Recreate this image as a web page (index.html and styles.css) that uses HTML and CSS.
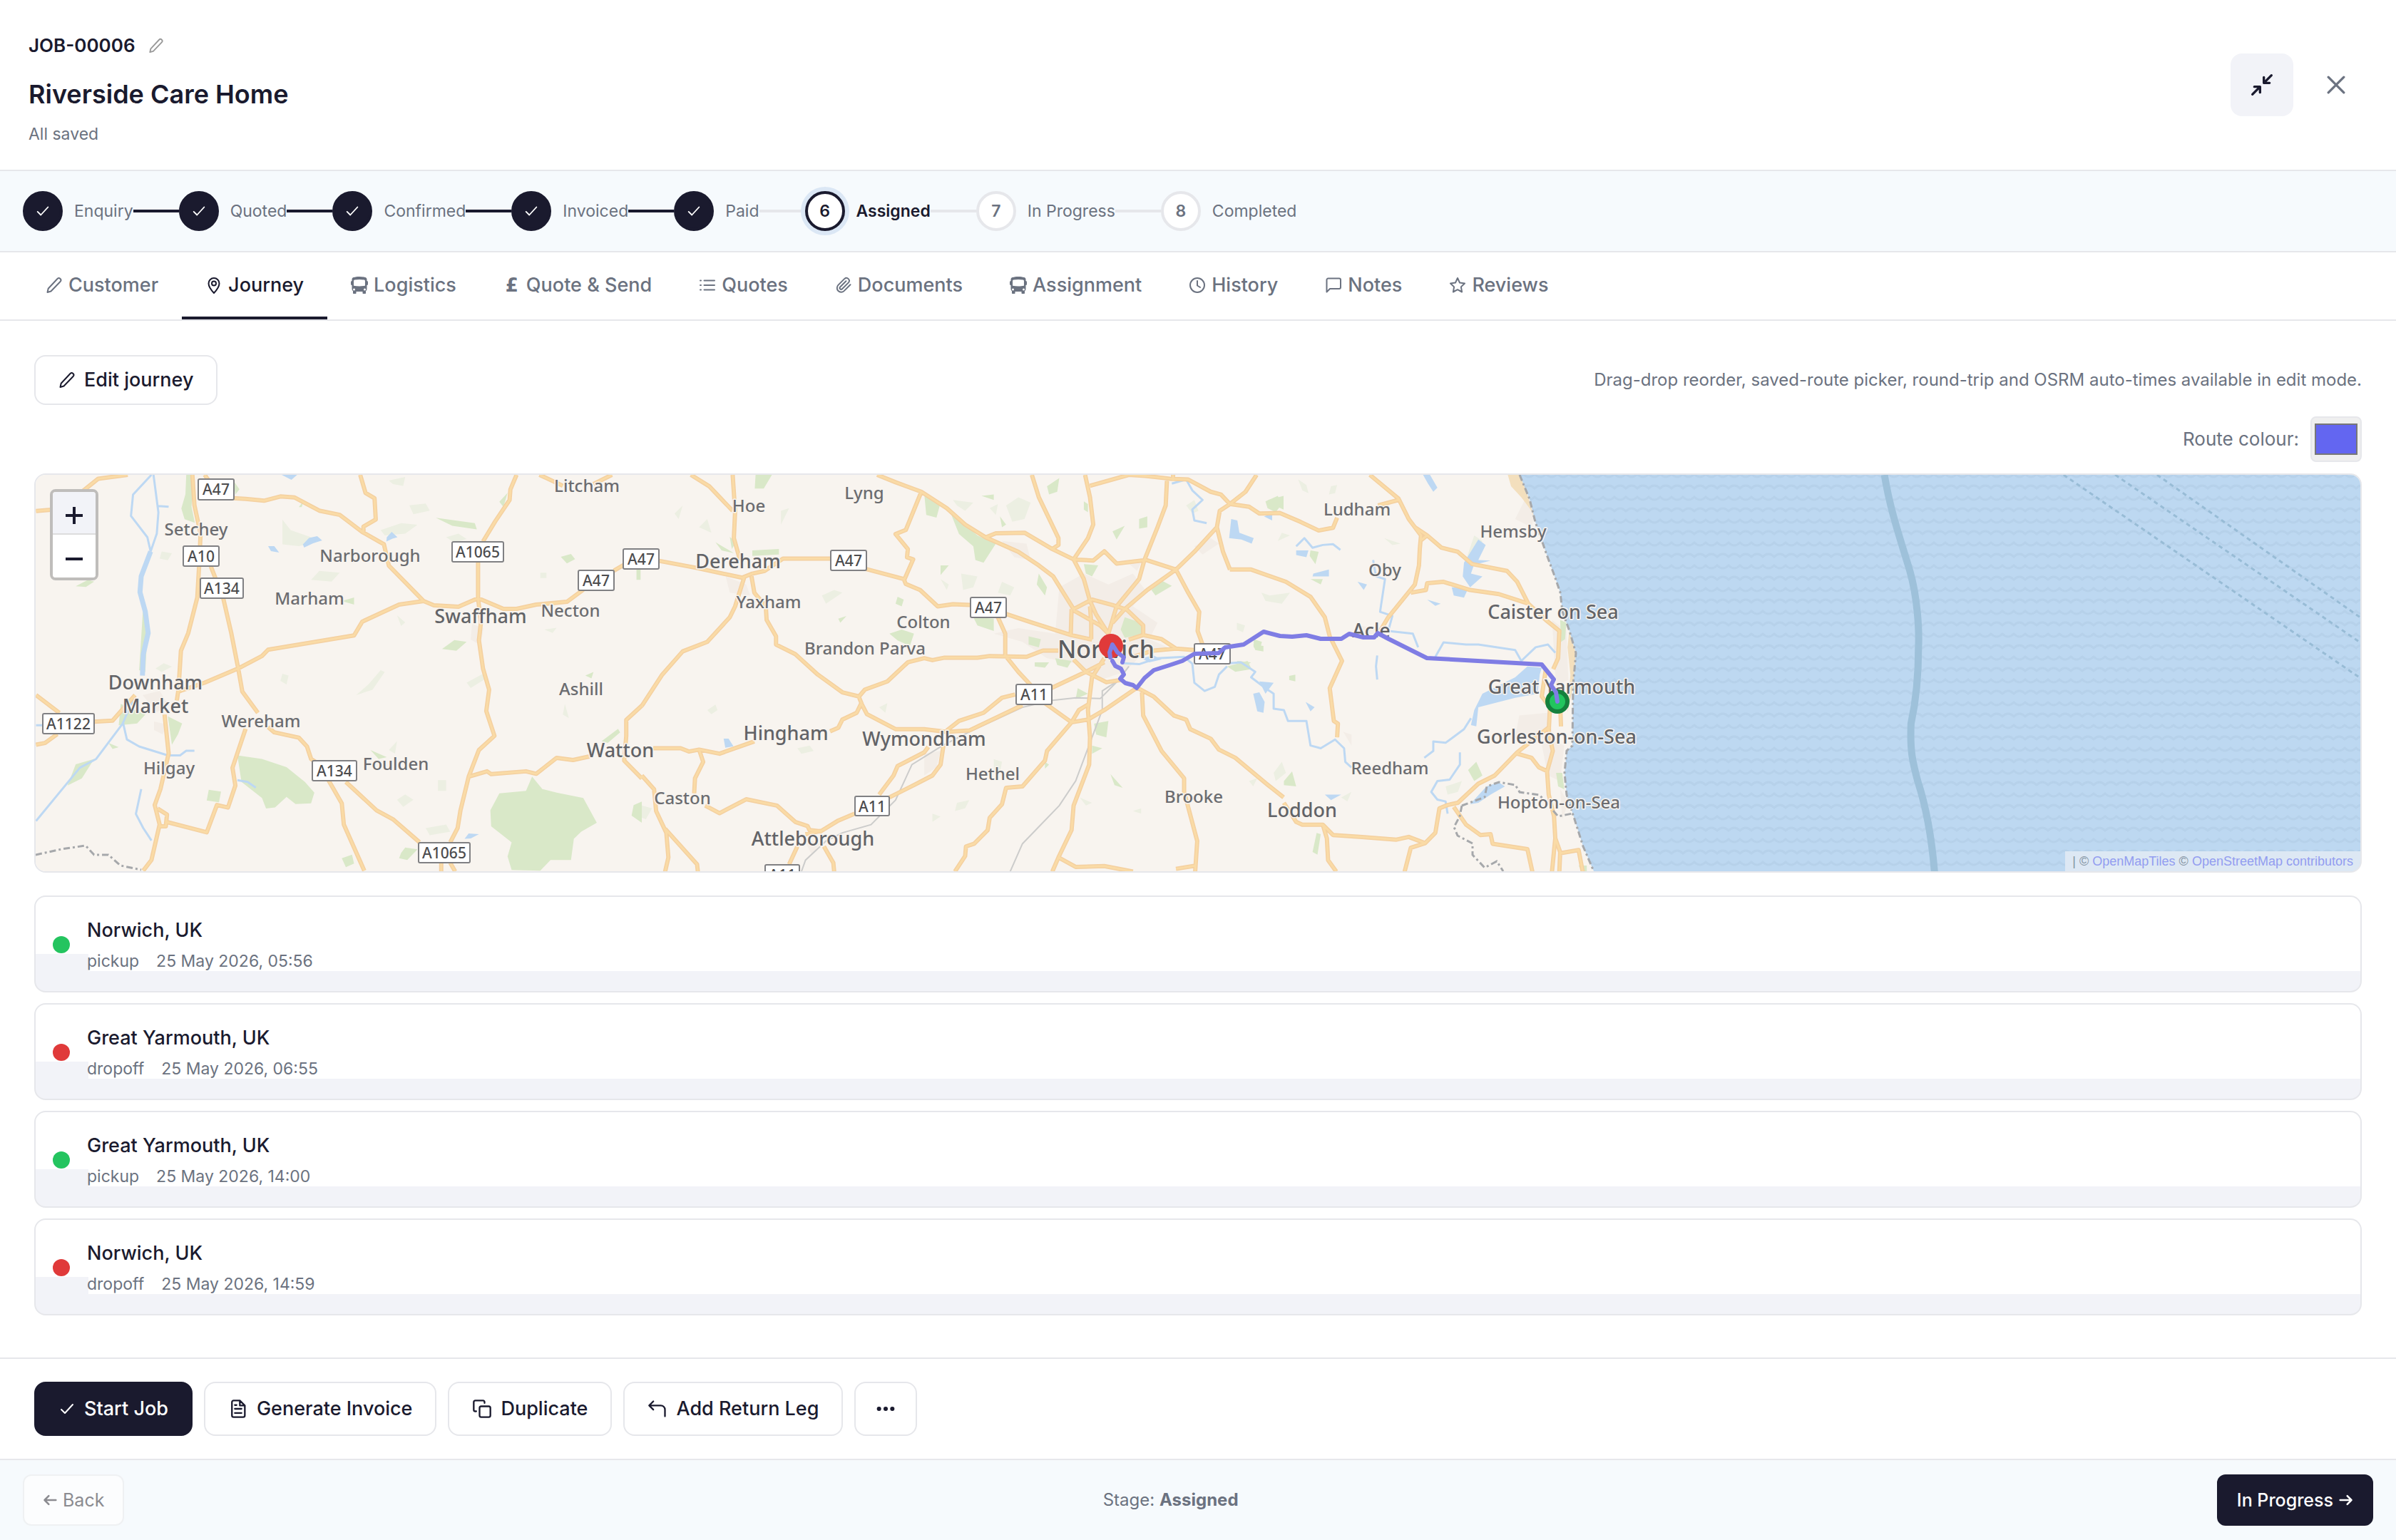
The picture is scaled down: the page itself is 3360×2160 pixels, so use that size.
FILE: index.html
```html
<!DOCTYPE html>
<html lang="en">
<head>
<meta charset="utf-8">
<meta name="viewport" content="width=device-width, initial-scale=1">
<title>JOB-00006 – Riverside Care Home</title>
<link rel="stylesheet" href="styles.css">
</head>
<body>
<svg class="sprite" aria-hidden="true">
  <symbol id="i-pencil" viewBox="0 0 24 24"><path d="M16.5 3a2.6 2.6 0 0 1 4 4L7.500 20.500 2.500 22l1.200-5.300z"/></symbol>
  <symbol id="i-check" viewBox="0 0 24 24"><path d="M4 13l5 5L20 6"/></symbol>
  <symbol id="i-pin" viewBox="0 0 24 24"><path d="M19.500 9.500C19.500 15 12 23 12 23S4.500 15 4.500 9.500a7.500 7.500 0 0 1 15 0z"/><circle cx="12" cy="9.500" r="3"/></symbol>
  <symbol id="i-bus" viewBox="0 0 16 16"><path fill="currentColor" stroke="none" fill-rule="evenodd" d="M16 7a1 1 0 0 1-1 1v3.500c0 .8-.4 1.500-1 2v2a.5.5 0 0 1-.5.5h-2a.5.5 0 0 1-.5-.5V14H5v1.500a.5.5 0 0 1-.5.5h-2a.5.5 0 0 1-.5-.5v-2a2.500 2.500 0 0 1-1-2V8a1 1 0 0 1-1-1V5a1 1 0 0 1 1-1V2.600C1 1.600 1.700.9 2.600.7 4 .3 6 0 8 0s4 .3 5.400.7c.9.2 1.600.9 1.600 1.900V4a1 1 0 0 1 1 1zM3.500 3a.9.9 0 0 0-.8.900V8.500c1.600.3 3.300.5 5.300.5s3.700-.2 5.300-.5V3.900a.9.9 0 0 0-.8-.9A40 40 0 0 0 8 2.700 40 40 0 0 0 3.500 3zM4 12a1 1 0 1 0-2 0 1 1 0 0 0 2 0zm10 0a1 1 0 1 0-2 0 1 1 0 0 0 2 0z"/></symbol>
  <symbol id="i-list" viewBox="0 0 24 24"><path d="M7.500 5.500H22M7.500 12H22M7.500 18.500H22M2 5.500h1M2 12h1M2 18.500h1"/></symbol>
  <symbol id="i-clip" viewBox="0 0 24 24"><path d="M21.500 11.200l-8.900 8.900a5.800 5.800 0 0 1-8.200-8.200l9-9a3.900 3.900 0 0 1 5.500 5.500l-8.900 8.900a1.950 1.950 0 0 1-2.800-2.800l8.200-8.200"/></symbol>
  <symbol id="i-clock" viewBox="0 0 24 24"><circle cx="12" cy="12" r="10"/><path d="M12 6v6.500l4 2.500"/></symbol>
  <symbol id="i-chat" viewBox="0 0 24 24"><path d="M2.500 21.500V4.500a2 2 0 0 1 2-2h15.500a2 2 0 0 1 2 2v10.500a2 2 0 0 1-2 2H7z"/></symbol>
  <symbol id="i-star" viewBox="0 0 24 24"><path d="M12 2l3 6.500 7 1-5.100 4.900 1.200 7.100L12 18.200 5.900 21.500l1.200-7.100L2 9.500l7-1z"/></symbol>
  <symbol id="i-doc" viewBox="0 0 24 24"><path d="M14 2H6.500a2 2 0 0 0-2 2v16a2 2 0 0 0 2 2h11.500a2 2 0 0 0 2-2V8zM14 2v6h6M8 12h8M8 17h8M8 7.500h2"/></symbol>
  <symbol id="i-copy" viewBox="0 0 24 24"><rect x="9" y="9" width="13" height="13" rx="2"/><path d="M5 15H4a2 2 0 0 1-2-2V4a2 2 0 0 1 2-2h9a2 2 0 0 1 2 2v1"/></symbol>
  <symbol id="i-return" viewBox="0 0 24 24"><path d="M7 13L2 8l5-5M2 8h14a5 5 0 0 1 5 5v8"/></symbol>
  <symbol id="i-dots" viewBox="0 0 24 24"><g fill="currentColor" stroke="none"><circle cx="4" cy="12" r="2.600"/><circle cx="12" cy="12" r="2.600"/><circle cx="20" cy="12" r="2.600"/></g></symbol>
  <symbol id="i-collapse" viewBox="0 0 24 24"><path d="M22 2l-8 8M14 4v6h6M2 22l8-8M10 20v-6H4"/></symbol>
  <symbol id="i-close" viewBox="0 0 24 24"><path d="M2 2l20 20M22 2L2 22"/></symbol>
  <symbol id="i-left" viewBox="0 0 24 24"><path d="M22 12H3M10 5l-7 7 7 7"/></symbol>
  <symbol id="i-right" viewBox="0 0 24 24"><path d="M2 12h19M14 5l7 7-7 7"/></symbol>
</svg>

<header class="head">
  <div class="head-text">
    <div class="job">JOB-00006 <button class="bare" type="button" aria-label="Edit job number"><svg class="ico s-22"><use href="#i-pencil"/></svg></button></div>
    <h1>Riverside Care Home</h1>
    <p class="saved">All saved</p>
  </div>
  <div class="head-tools">
    <button class="tool tool-on" type="button" aria-label="Collapse"><svg class="ico s-32 mid"><use href="#i-collapse"/></svg></button>
    <button class="tool" type="button" aria-label="Close"><svg class="ico s-26 bold"><use href="#i-close"/></svg></button>
  </div>
</header>

<ol class="steps">
  <li class="done"><span class="dot"><svg class="ico s-22"><use href="#i-check"/></svg></span><span class="name">Enquiry</span></li>
  <li class="done"><span class="dot"><svg class="ico s-22"><use href="#i-check"/></svg></span><span class="name">Quoted</span></li>
  <li class="done"><span class="dot"><svg class="ico s-22"><use href="#i-check"/></svg></span><span class="name">Confirmed</span></li>
  <li class="done"><span class="dot"><svg class="ico s-22"><use href="#i-check"/></svg></span><span class="name">Invoiced</span></li>
  <li class="done last-done"><span class="dot"><svg class="ico s-22"><use href="#i-check"/></svg></span><span class="name">Paid</span></li>
  <li class="current"><span class="dot">6</span><span class="name">Assigned</span></li>
  <li><span class="dot">7</span><span class="name">In Progress</span></li>
  <li><span class="dot">8</span><span class="name">Completed</span></li>
</ol>

<nav class="tabs" role="tablist" aria-label="Job sections">
  <button role="tab" type="button"><svg class="ico s-24"><use href="#i-pencil"/></svg>Customer</button>
  <button role="tab" type="button" aria-selected="true"><svg class="ico s-24"><use href="#i-pin"/></svg>Journey</button>
  <button role="tab" type="button"><svg class="ico s-24"><use href="#i-bus"/></svg>Logistics</button>
  <button role="tab" type="button"><span class="pound" aria-hidden="true">£</span>Quote &amp; Send</button>
  <button role="tab" type="button"><svg class="ico s-24"><use href="#i-list"/></svg>Quotes</button>
  <button role="tab" type="button"><svg class="ico s-24"><use href="#i-clip"/></svg>Documents</button>
  <button role="tab" type="button"><svg class="ico s-24"><use href="#i-bus"/></svg>Assignment</button>
  <button role="tab" type="button"><svg class="ico s-24"><use href="#i-clock"/></svg>History</button>
  <button role="tab" type="button"><svg class="ico s-24"><use href="#i-chat"/></svg>Notes</button>
  <button role="tab" type="button"><svg class="ico s-24"><use href="#i-star"/></svg>Reviews</button>
</nav>

<main class="content">
  <div class="toolbar">
    <button class="btn btn-sm" type="button"><svg class="ico s-24"><use href="#i-pencil"/></svg>Edit journey</button>
    <p class="hint">Drag-drop reorder, saved-route picker, round-trip and OSRM auto-times available in edit mode.</p>
  </div>
  <div class="colour">
    <label for="route-colour">Route colour:</label>
    <input id="route-colour" type="color" value="#6366f1">
  </div>

  <section class="map" aria-label="Route map">
    <svg class="map-art" viewBox="50 666 3260 556" preserveAspectRatio="xMidYMid slice">
      <defs>
        <pattern id="waves" x="0" y="2" width="16" height="32" patternUnits="userSpaceOnUse">
          <rect width="16" height="32" fill="#bdd8f1"/>
          <path d="M0 7q4 0 8 4q4-4 8-4M0 27q4 0 8-4q4 4 8 4" fill="none" stroke="#b6d1ea" stroke-width="3"/>
        </pattern>
      </defs>
      <rect x="50" y="666" width="3260" height="556" fill="#f8f4ef"/>

      <!-- built-up areas and farmland -->
      <g class="pale">
        <g transform="translate(0 460) scale(.574 .4975)">
          <path d="M690 540l20 30 50 20 10 15-40 10-40-5zM930 570l50-20 40 5-30 25-50 5zM760 710l20-25 50 5-20 25zM1000 500l40-5 10 20-40 10zM1090 590l30-10 20 15-30 10zM870 1035l30-30 30-40 10 5-30 50zM950 1190l20-25-5 35zM690 975l15 5-5 25-15-10zM1140 1000l40-25 5 15-35 25zM1070 1275h20v30h-20zM1040 1410l50-10 10 20-50 10zM970 1330l20-15 20 15-25 20zM380 960l20-15 20 10-25 15zM395 630l25 5-10 20-20-5zM970 810l20 20-10 10zM1380 1060l10 40-15-10zM950 430l40-10-5 25-25-5zM1330 850l30-5-10 15zM1320 690h15v15h-15z"/>
        </g>
        <g transform="translate(900 640) scale(.574 .3827)">
          <path d="M760 160l50 10-20 30-20-20zM850 190l20-15-5 40zM890 180l30-30 30 20-15 60-30 10zM780 430l40 10-10 40-25 10zM880 460l30 20-10 30-30-10zM730 450l20 20-5 20zM580 920l20-15-5 35zM160 930l20-20 5 20-15 15zM140 260l20-30 10 50zM340 200l20-10-20 60zM380 1070l30-10 10 20-30 10zM860 1110l20 10-5 40-15-5zM770 1270l30-10-10 30-25 10zM710 1310l20 10-20 20zM1070 1250l30 20-15 10zM440 510l30-20 20 10-40 40zM80 210l20-30-10 50zM0 1280l25 10-15 40-10-5zM1330 180l20-20 10 40-15 10zM1200 1300l20-10v20z"/>
        </g>
        <g transform="translate(1700 640) scale(.574 .3827)">
          <path d="M210 85l20 20 5 30-15-10zM290 110l15-5-5 30-15 5zM120 500l20 10 50-10-20 40-40-10zM420 300l40 20-20 5zM170 280l20 10-30 20zM60 610l20 10-5 25-15-10zM640 290l20 20-15 60-25 10zM570 1210l40-20-10 40-25 10zM150 1160l20-40 10 40-25 30zM315 1250l25-20-10 35zM90 1190l20-10-10 30z"/>
        </g>
      </g>
      <g class="town">
        <g transform="translate(900 640) scale(.574 .3827)">
          <path d="M1020 480l60-50 60 40 60-40 30 60-30 60 60 60-20 60 60 40-80 20-40 60-60 30-60-60-70-20-60-60-70-30 60-20 90 20zM880 310l60 10 10 60-40-10zM205 440l50 30 10 40-50-10zM1350 330l40-30 20 20-40 40zM690 1090l40-10-10 60-30 30zM395 1400l40 20-20 40zM1180 380l40 10-10 30z"/>
        </g>
        <g transform="translate(1700 640) scale(.574 .3827)">
          <path d="M750 950l70-10 10 70-60 50-30-30zM830 600l35 40 5 180-30 20zM800 1020l60 40-10 130-30-20zM850 1220l20 50-15 60zM770 140l20 60-10 60-40-30zM340 1060l-20-50 20 10zM350 620l60 10 5 30-50-5z"/>
        </g>
        <path d="M662 875l16 6-4 24-14-8zM200 975l24-6 12 20-16 10zM216 1012l18 4-6 14-12-6z"/>
      </g>

      <!-- woodland -->
      <g class="wood">
        <g transform="translate(0 460) scale(.574 .4975)">
          <path d="M580 1205L640 1215 700 1238 745 1280 768 1310 760 1340 722 1342 700 1322 672 1352 650 1355 640 1325 590 1280zM1198 1360L1220 1312 1285 1305 1300 1265 1325 1300 1360 1310 1425 1325 1458 1395 1420 1420 1402 1440 1395 1500 1345 1500 1320 1530 1250 1528 1240 1490 1250 1450 1200 1405zM455 414h18l-5 90 8 45-25-10-8-30 10-40zM165 1290L185 1230 230 1215 200 1270zM295 1060l60 30-20 25-45 5zM410 1095l35 20-10 30-15 30zM510 1302l30 5-5 30-30-5zM350 780l10 80-5 110-15-5zM1080 905l30-25 30 5-25 25zM1065 535l95 15 5 18-60-10zM1370 645l25-8 10 15-20 12zM1220 490l20-25-10 40zM185 728l30-18 15 5-20 15zM835 770l30-10v20zM1470 1165l40-35 5 10-30 30zM1430 980l20-10-5 18zM570 430l15 25-10 15zM980 1480l10-15 30 5-25 30-20-5zM835 1495l25-10 5 25-20 10zM1548 1345l20-10v60l-25-20zM1555 680h10v30h-10zM905 1190l40 20-20 5zM265 1170l25 12-15 5zM730 505l12-18-5 18z"/>
        </g>
        <g transform="translate(900 640) scale(.574 .3827)">
          <path d="M278 68h40l-20 50h-22zM690 135l40 35-10 55-25-10zM755 210l35 40 30 40 45 30-30 70-20-10-5-50-35-45zM970 430l20 50-5 30-20-40zM1080 395l35 5-15 40-15-10zM1270 455l25 20-40 35-10-20zM1180 590l40 20 10 40-50 15-10-30zM810 590l50 5v45l-40-20zM605 650l30-15 30 15-10 45-30-20zM625 515l15 10-5 25-15-10zM480 595l20-10-15 25zM270 345l65-5v20l-65 5zM180 315l45 40-30-10zM215 295l15 20-10 25zM1215 230l20-10v40l-20 5zM1150 275l30-20-20 50zM1080 165l10 10v30l-10-10zM990 110l30-30-5 50-20 10zM830 145l30-5v20zM730 400l20 0-20 35zM1065 850l25 20-30 20zM1105 980l35-10-5 60-25-10zM1100 1060l25 10-25 20zM1145 1165l30 50-20-10zM985 1120l10 10-10 15zM1010 740l40 10-10 25-25-10zM960 755h35l-10 20-25-5zM945 660l30 10-5 30-25-10zM1495 670l20 10-5 30-15-10zM1430 770l50-20 10 30-40 10zM1530 160l38-15v50l-30-20zM875 220l15 30-10 10z"/>
        </g>
        <g transform="translate(1700 640) scale(.574 .3827)">
          <path d="M130 165l30-20 10 30-15 30-20-15zM240 345l20 5-8 45-14-30zM240 450l30 0-5 20zM100 690l25 5v20l-20-5zM188 805l15-5v25l-15-5zM625 1150l20-30 15 50-20 20zM175 1190l20-35 10 55-30-5zM255 1380l10 5-8 75-12-10zM850 600l15 10-3 60-10 10zM840 1160h15l5 60-15-10zM895 1500h20v22h-12zM60 750l35 5-20 20z"/>
        </g>
      </g>

      <!-- rivers and broads -->
      <g class="river">
        <g transform="translate(0 460) scale(.574 .4975)">
          <path class="wide" d="M368 630L345 700 342 745 355 800 362 860 350 920 348 980"/>
          <path d="M370 414L325 470 320 530 360 590 368 630M375 414L387 520 383 580 368 630M387 502L412 504"/>
          <path d="M325 1045L300 1115 235 1215 195 1240 88 1390M300 1110L310 1160 340 1180 410 1205 440 1205 455 1192 475 1192M345 1300L332 1370 350 1410 370 1445M88 1120H105M580 1275L605 1280 625 1296"/>
        </g>
        <g transform="translate(900 640) scale(.574 .3827)">
          <path d="M1170 758L1215 762 1260 740 1325 735 1345 760 1350 830 1375 860 1400 845 1410 800 1430 770M1295 100L1330 85 1345 125 1370 160 1345 195 1350 235 1380 245"/>
        </g>
        <g transform="translate(1700 640) scale(.574 .3827)">
          <path d="M30 760L70 755 105 790 95 810 130 850 150 870 150 925 175 930 185 970 230 970 240 1060 265 1070 300 1038 322 1070 325 1120 340 1140M393 380L400 440 422 450 410 570 440 585 430 640 490 650 503 700M545 735L565 682 620 690 650 690 740 710 755 750 790 700 820 690 838 720M403 730L400 770 403 818M632 960L615 1000 570 1050 540 1045 540 1080 518 1105M605 1085L605 1130 580 1185 550 1190 535 1230 550 1258 570 1265 575 1310M205 330L225 300 245 335 270 325 295 322 313 343"/>
        </g>
      </g>
      <g class="lake">
        <g transform="translate(0 460) scale(.574 .4975)">
          <path d="M740 610l15-18 20-5 12 12-22 8-22 12zM655 615l15 0 12 18-20-4zM945 590l12-15 14 15-12 4-15 8zM1135 1440l10-15 25 2-20 12zM688 414h38l-14 14zM318 1060l12-10 8 10-10 10z"/>
        </g>
        <g transform="translate(900 640) scale(.574 .3827)"><path d="M200 1035l12 0 12 28-20 5zM1220 740l30-10 20 15-30 10zM1440 230l15 5 5 45 35 20-5 20-25-15-30-5zM1520 220l20-10v25z"/></g>
        <g transform="translate(1700 640) scale(.574 .3827)">
          <path d="M770 770L805 775 800 800 795 870 740 885 650 920 645 990 632 985 640 930 660 870 700 840 740 810zM650 305L668 325 650 380 680 382 655 392 640 395 632 430 660 440 630 480 612 440 615 390zM585 480L625 485 615 518 590 510zM515 68H532L550 115 540 130 527 100zM205 345L235 345 230 370 205 362zM247 430L285 415 285 440 245 440zM355 460L378 470 370 490zM525 525L558 540 545 548zM100 870L115 865 128 900 125 940 110 935zM115 825L150 830 130 870zM228 900L250 920 240 935zM275 1240L315 1240 290 1260zM670 1210l30-15 15 15-35 30-30 30-20 5z"/>
        </g>
      </g>

      <!-- railway -->
      <g class="rail" transform="translate(900 640) scale(.574 .3827)">
        <path d="M390 1522L400 1480 450 1410 490 1380 560 1350 620 1260 660 1130 735 1060 800 1010 930 920 1000 895 1060 885 1120 888 1165 820 1190 770M1165 820L1125 860 1125 930 1100 1030 1060 1190 1020 1280 930 1420 900 1522"/>
      </g>

      <!-- main roads: casing first, then the lighter centre line -->
      <g class="road-case">
        <g id="roads">
          <g transform="translate(0 460) scale(.574 .4975)">
            <path d="M571 480L600 482 645 487 685 475 720 478 780 515 830 527 885 575 938 610 950 670 1035 770 1060 782 1120 786 1168 762 1230 792 1262 792 1310 780 1385 772 1425 738M1500 684L1524 668M88 516L130 512M200 462L240 425 312 414M470 414L475 500 490 580 487 660 482 760 460 860 442 910 436 1020 432 1050M500 414L510 430M515 672L545 760 565 860 582 960 592 1025 630 1085M655 1125L670 1140 730 1155 750 1180 760 1215 780 1230 815 1300 835 1340 840 1400 890 1530M436 1025L500 1000 582 960 640 925 655 907 865 867 885 828 975 780 1035 770M88 1175L110 1170 140 1145M88 1035L145 1085M230 1110L275 1107 330 1035M402 1090L412 1200 392 1300 378 1345 390 1400 370 1500 350 1530M385 1355L408 1372 405 1405 390 1405M408 1393L505 1422 530 1345 557 1352 575 1290 568 1240 600 1130M845 1280L920 1360 960 1385 1025 1450M1078 1508V1532M1100 1508L1112 1532M1100 1450L1118 1410 1125 1360 1145 1265 1170 1190 1208 1150 1188 1080 1195 1020 1180 960 1170 880 1175 830 1168 762 1168 658M1180 602L1210 545 1245 485 1247 455 1262 414M880 414L893 465 915 480 918 540 888 560 888 580M1145 1265L1190 1250 1200 1258 1285 1250 1310 1257 1360 1212 1400 1218 1440 1208M1318 414L1375 445M1450 440L1495 414M1568 1065L1530 1105 1530 1150 1525 1220 1568 1270"/>
          </g>
          <g transform="translate(900 640) scale(.574 .3827)">
            <path d="M42 383L130 408 245 445 270 430 300 420 345 375 460 375M548 413L640 450 645 468 680 490 723 550 760 542 802 545M890 578L950 608 1048 655 1100 672M222 68L228 200 225 300 240 380M120 68L165 110 222 200M250 445L228 550 215 590 160 680 100 715 50 800 0 915M268 440L275 500 303 550 305 600 328 660 328 690 375 725 430 800 490 865 530 880M575 68L620 95 683 130 745 190 790 250 840 297 920 350 970 400 1005 440 1055 560M683 130L645 270 620 285 650 340 648 370 663 378 642 450M840 297L865 282 935 280 1003 340 1055 378 1103 382 1130 348 1160 393 1232 380 1305 415 1335 500 1362 570 1358 640 1370 690M953 68L970 150 1018 300 1018 325 1003 340M1083 68L1095 150 1103 250 1090 300 1055 378 1080 450 1095 530 1110 580 1140 650M1095 108L1190 68 1230 72 1290 82 1335 85 1390 130 1415 140 1437 175M1298 68V90M1283 90L1280 180 1260 260 1228 380 1215 450 1160 550 1140 650M1437 175L1412 200 1405 260 1350 350 1305 415 1235 490 1180 560 1150 610M1437 175L1475 130 1502 68M1405 260L1420 350 1437 415M1055 560L1100 525 1150 545 1185 562 1225 620 1225 655 1190 672M1225 655L1270 670 1305 705 1350 710M1055 565L1120 620 1140 650M1050 560L1048 655M1200 735L1250 712 1305 705M1095 550L1098 610 1098 670M870 590L888 650 888 730 920 790 950 838M528 885L545 855 600 825 650 755 690 740 710 747 740 738 820 738 850 732 940 735 980 712 1018 712M1000 850L1085 790 1130 755M745 1010L800 1005 870 955 930 912M745 1005L775 970 835 940 880 885 912 873M985 905L1050 975 1090 965 1130 930 1210 848M530 880L538 910 550 945 620 1000 690 1000 745 1010M538 900L525 940 490 965 480 995 460 1008M737 1060L730 1130 710 1170 665 1205 605 1250M700 1065L690 1085 625 1135 615 1170 580 1240M520 1310L480 1335 440 1372 400 1385M380 1430L360 1495M440 1375L410 1370 405 1355 375 1340 330 1280 255 1257 190 1308 155 1280M445 1430L468 1490 470 1522M28 1070L95 1070 115 1082 140 1075 190 1090 275 1045M140 1075L150 1120 130 1180 128 1235M0 1170L30 1220 35 1300 60 1380 65 1470 57 1522M57 1365L90 1420 135 1495 137 1522M1050 975L990 1080 985 1115 930 1210 890 1215 880 1275 850 1325 845 1370 812 1420 792 1430 790 1465 765 1522M1130 740L1100 810 1090 930 1095 1030 1093 1130 1055 1280 1050 1370 1018 1470 1003 1522M1018 1470L1060 1505 1130 1502 1200 1522M1305 1512L1355 1500M1055 745L1085 790 1135 828 1170 820M1090 910L1068 930 1050 975M1210 848L1250 880 1300 950 1330 965 1340 1000 1390 1035 1410 1075 1450 1105 1530 1205 1568 1250M1222 865L1225 950 1270 1080 1325 1180 1325 1230 1357 1410 1352 1522"/>
          </g>
          <g transform="translate(1700 640) scale(.574 .3827)">
            <path d="M45 175L90 185 115 210 165 208 215 240 260 272 295 262 305 225M43 415L95 415 180 460 240 515 275 590 287 660 317 750 287 850 297 970 307 980 305 1030M385 68L455 155 480 230 510 290 507 340 505 400 495 470 430 590 410 640M405 180L455 160M495 260L525 290 560 335 600 350 635 395 720 420 745 460 772 540 815 600 848 640 845 740 833 780M525 290L508 310M485 500L522 490 525 465 565 460 630 490 700 505 772 540M815 780L805 880 825 920 822 1010 832 1080 818 1155 822 1240 835 1320 838 1400 850 1450 848 1522M838 1400L830 1522M850 910L852 990M175 1270L205 1340 220 1350 270 1350 295 1388 360 1395 450 1405 480 1395 520 1418 545 1380 555 1290 575 1278 600 1270 650 1200 690 1170 745 1085 825 990M745 1090L780 1105 798 1140 820 1155M270 1350L280 1400 283 1480 303 1522M520 1418L485 1435 470 1522M590 1285L620 1350 655 1388 680 1385 685 1420 770 1440 782 1522M850 1455L895 1443 905 1522"/>
          </g>
        </g>
      </g>
      <use href="#roads" class="road-fill"/>

      <!-- sea -->
      <g transform="translate(1700 640) scale(.574 .3827)">
        <path fill="#f3dfbd" d="M722 68H755L790 240 780 200 755 150 730 110zM872 640L888 720 882 840 868 940 875 800 868 700z"/>
      </g>
      <path fill="url(#waves)" d="M2131 666L2145 700 2153 732 2169 778 2179 805 2188 831 2191 858 2201 885 2210 916 2206 961 2205 1046 2197 1053 2194 1084 2197 1115 2208 1149 2220 1187 2235 1222H3310V666z"/>
      <path class="boundary" d="M2131 666L2145 700 2153 732 2169 778 2179 805 2188 831 2191 858 2201 885 2210 916 2206 961 2205 1046 2197 1053 2194 1084 2197 1115 2208 1149 2220 1187 2235 1222"/>
      <g class="boundary">
        <path d="M2050 1130L2082 1118 2085 1103 2102 1097 2125 1101 2131 1111 2159 1115 2185 1145 2205 1141M2050 1130L2047 1145 2039 1160 2044 1172 2065 1183 2065 1199 2082 1217 2099 1208 2108 1222M50 1199L86 1191 120 1186 132 1199 152 1199 169 1214 198 1220"/>
      </g>
      <g transform="translate(2500 640) scale(.5485 .3827)">
        <path class="depth" d="M260 68C275 200 300 300 325 420 345 520 349 640 347 700 347 800 340 900 328 980 325 1080 332 1120 345 1190 370 1300 382 1420 388 1522"/>
        <path class="ferry" d="M718 68L1476 812M850 68L1476 682M957 68L1476 590"/>
      </g>

      <!-- road shields -->
      <g class="shield">
        <rect x="278" y="672" width="50" height="29"/><text x="303" y="694">A47</text>
        <rect x="257" y="766" width="50" height="28"/><text x="282" y="788">A10</text>
        <rect x="281" y="811" width="60" height="28"/><text x="311" y="833">A134</text>
        <rect x="634" y="760" width="72" height="28"/><text x="670" y="782">A1065</text>
        <rect x="811" y="800" width="50" height="28"/><text x="836" y="822">A47</text>
        <rect x="874" y="770" width="50" height="28"/><text x="899" y="792">A47</text>
        <rect x="60" y="1001" width="72" height="28"/><text x="96" y="1023">A1122</text>
        <rect x="438" y="1067" width="62" height="28"/><text x="469" y="1089">A134</text>
        <rect x="587" y="1182" width="72" height="28"/><text x="623" y="1204">A1065</text>
        <rect x="1165" y="772" width="50" height="28"/><text x="1190" y="794">A47</text>
        <rect x="1361" y="838" width="50" height="28"/><text x="1386" y="860">A47</text>
        <rect x="1425" y="960" width="50" height="28"/><text x="1450" y="982">A11</text>
        <rect x="1199" y="1117" width="48" height="27"/><text x="1223" y="1139">A11</text>
        <rect x="1073" y="1213" width="48" height="27"/><text x="1097" y="1235">A11</text>
        <rect x="1675" y="903" width="50" height="28"/><text x="1700" y="925">A47</text>
      </g>

      <!-- place names -->
      <g class="place">
        <text x="275" y="751">Setchey</text><text x="519" y="788">Narborough</text><text x="823" y="690">Litcham</text>
        <text x="434" y="848">Marham</text><text x="800" y="865">Necton</text><text x="815" y="975">Ashill</text>
        <text x="366" y="1020">Wereham</text><text x="237" y="1086">Hilgay</text><text x="555" y="1080">Foulden</text>
        <text x="1050" y="718">Hoe</text><text x="1212" y="700">Lyng</text><text x="1078" y="853">Yaxham</text>
        <text x="1295" y="881">Colton</text><text x="1213" y="918">Brandon Parva</text><text x="1392" y="1094">Hethel</text>
        <text x="1674" y="1126">Brooke</text><text x="957" y="1128">Caston</text><text x="1903" y="723">Ludham</text>
        <text x="2122" y="754">Hemsby</text><text x="1942" y="808">Oby</text><text x="1949" y="1086">Reedham</text>
        <text x="2186" y="1134">Hopton-on-Sea</text>
      </g>
      <g class="place town-name">
        <text x="674" y="874">Swaffham</text><text x="218" y="967">Downham</text><text x="218" y="1000">Market</text>
        <text x="870" y="1062">Watton</text><text x="1035" y="797">Dereham</text><text x="1102" y="1038">Hingham</text>
        <text x="1296" y="1046">Wymondham</text><text x="1140" y="1186">Attleborough</text><text x="2178" y="868">Caister on Sea</text>
        <text x="2190" y="973">Great Yarmouth</text><text x="2183" y="1043">Gorleston-on-Sea</text><text x="1826" y="1146">Loddon</text>
        <text x="1923" y="894">Acle</text>
      </g>
      <g class="place city-name"><text x="1551" y="923">Norwich</text></g>

      <!-- stops and route -->
      <circle cx="1558" cy="906" r="17" fill="#e03a3a"/>
      <circle cx="2184" cy="984" r="14" fill="#22c55e" stroke="#15803d" stroke-width="6"/>
      <g class="route">
        <path d="M1557 922L1556 915 1560 904 1567 915 1576 922 1574 929M1560 927L1564 934 1572 938 1576 946 1571 952 1578 958 1589 961 1594 965 1605 951 1618 940 1640 933 1658 927 1675 917 1709 916 1718 908 1744 904 1772 886 1795 892 1812 893 1832 891 1852 896 1881 896 1892 889 1912 894 1927 894 1932 888 1947 896 2001 923 2162 932 2179 953 2175 961 2182 971 2184 984"/>
      </g>
    </svg>
    <div class="zoom">
      <button type="button" class="hover" aria-label="Zoom in"><svg class="ico s-24 heavy" viewBox="0 0 24 24"><path d="M0 12h24M12 0v24"/></svg></button>
      <button type="button" aria-label="Zoom out"><svg class="ico s-24 heavy" viewBox="0 0 24 24"><path d="M0 12h24"/></svg></button>
    </div>
    <p class="credit">| © <a href="#tiles">OpenMapTiles</a> © <a href="#osm">OpenStreetMap contributors</a></p>
  </section>

  <ul class="stops">
    <li class="pickup"><span class="mark"></span><div><h2>Norwich, UK</h2><p><span>pickup</span><time>25 May 2026, 05:56</time></p></div></li>
    <li class="dropoff"><span class="mark"></span><div><h2>Great Yarmouth, UK</h2><p><span>dropoff</span><time>25 May 2026, 06:55</time></p></div></li>
    <li class="pickup"><span class="mark"></span><div><h2>Great Yarmouth, UK</h2><p><span>pickup</span><time>25 May 2026, 14:00</time></p></div></li>
    <li class="dropoff"><span class="mark"></span><div><h2>Norwich, UK</h2><p><span>dropoff</span><time>25 May 2026, 14:59</time></p></div></li>
  </ul>
</main>

<div class="actions">
  <button class="btn btn-dark" type="button"><svg class="ico s-24"><use href="#i-check"/></svg>Start Job</button>
  <button class="btn" type="button"><svg class="ico s-28"><use href="#i-doc"/></svg>Generate Invoice</button>
  <button class="btn" type="button"><svg class="ico s-28"><use href="#i-copy"/></svg>Duplicate</button>
  <button class="btn" type="button"><svg class="ico s-28"><use href="#i-return"/></svg>Add Return Leg</button>
  <button class="btn btn-more" type="button" aria-label="More actions"><svg class="ico s-28"><use href="#i-dots"/></svg></button>
</div>

<footer class="foot">
  <button class="btn btn-foot" type="button" disabled><svg class="ico s-20 bold"><use href="#i-left"/></svg>Back</button>
  <p>Stage: <strong>Assigned</strong></p>
  <button class="btn btn-foot btn-dark" type="button">In Progress<svg class="ico s-20 bold"><use href="#i-right"/></svg></button>
</footer>
</body>
</html>
```

FILE: styles.css
```css
:root {
  --ink: #1a1a2e;
  --muted: #6b7280;
  --line: #e6e7eb;
  --tint: #f6fafd;
  --wash: #f2f3f8;
}

* { box-sizing: border-box; margin: 0; padding: 0; }

body {
  display: flex;
  flex-direction: column;
  min-height: 100vh;
  background: #fff;
  color: var(--ink);
  font: 400 24px/32px Inter, "Liberation Sans", sans-serif;
}

button { font: inherit; color: inherit; background: none; border: 0; cursor: pointer; }
ol, ul { list-style: none; }

.sprite { position: absolute; width: 0; height: 0; }
.ico { flex: none; fill: none; stroke: currentColor; stroke-width: 2; stroke-linecap: round; stroke-linejoin: round; }
.mid { stroke-width: 2.5; }
.bold { stroke-width: 3; }
.heavy { stroke-width: 4; stroke-linecap: butt; }
.s-20 { width: 20px; height: 20px; }
.s-22 { width: 22px; height: 22px; }
.s-24 { width: 24px; height: 24px; }
.s-26 { width: 26px; height: 26px; }
.s-28 { width: 28px; height: 28px; }
.s-32 { width: 32px; height: 32px; }

/* header */
.head {
  display: flex;
  align-items: center;
  justify-content: space-between;
  padding: 34px 40px;
  border-bottom: 2px solid var(--line);
}
.head-text { display: flex; flex-direction: column; }
.job { display: flex; align-items: center; gap: 18px; height: 60px; font-size: 26px; font-weight: 600; }
.bare { display: flex; color: #999; }
h1 { font-size: 36px; line-height: 48px; font-weight: 600; margin-top: 14px; }
.saved { margin-top: 16px; color: var(--muted); font-size: 23px; }
.head-tools { display: flex; gap: 16px; }
.tool { display: flex; align-items: center; justify-content: center; width: 88px; height: 88px; border-radius: 16px; color: var(--muted); }
.tool-on { background: var(--wash); color: var(--ink); }

/* stage stepper */
.steps {
  display: flex;
  align-items: center;
  padding: 28px 32px;
  background: var(--tint);
  border-bottom: 2px solid var(--line);
  color: var(--muted);
  font-size: 23px;
}
.steps li { display: flex; align-items: center; }
.steps li::after { content: ""; width: 64px; height: 4px; background: var(--line); }
.steps li:last-child::after { display: none; }
.steps .done::after { background: var(--ink); }
.steps .last-done::after { background: var(--line); }
.dot {
  display: flex;
  align-items: center;
  justify-content: center;
  width: 56px;
  height: 56px;
  margin-right: 16px;
  border: 4px solid var(--line);
  border-radius: 50%;
  background: #fff;
  font-weight: 600;
}
.done .dot { background: var(--ink); border-color: var(--ink); color: #fff; }
.current .dot { border-color: var(--ink); color: var(--ink); box-shadow: 0 0 0 6px #dbe7f5; }
.current .name { color: var(--ink); font-weight: 600; }

/* tabs */
.tabs { display: flex; padding: 0 31px; border-bottom: 2px solid var(--line); }
.tabs button {
  display: flex;
  align-items: center;
  gap: 8px;
  height: 94px;
  padding: 2px 33px 0;
  border-bottom: 4px solid transparent;
  color: var(--muted);
  font-size: 27px;
  font-weight: 500;
}
.tabs [aria-selected="true"] { color: var(--ink); border-color: var(--ink); }
.pound { width: 24px; font: 700 26px/26px "DejaVu Sans", sans-serif; text-align: center; }

/* content */
.content { flex: 1; padding: 48px; }
.toolbar { display: flex; justify-content: space-between; align-items: center; }
.hint { color: var(--muted); }
.btn {
  display: flex;
  align-items: center;
  gap: 12px;
  height: 76px;
  padding: 0 32px;
  border: 2px solid var(--line);
  border-radius: 16px;
  background: #fff;
  font-size: 27px;
  font-weight: 500;
}
.btn-sm { height: 70px; }
.btn-dark { background: var(--ink); border-color: var(--ink); color: #fff; }
.btn-more { padding: 0 28px; }
.colour { display: flex; justify-content: flex-end; align-items: center; gap: 16px; margin: 16px 0; color: var(--muted); font-size: 26px; }
.colour input { width: 72px; height: 64px; padding: 8px 4px; border: 2px solid var(--line); border-radius: 8px; background: #efefef; }
.colour input::-webkit-color-swatch-wrapper { padding: 0; }
.colour input::-webkit-color-swatch { border: 2px solid #777; border-radius: 0; }

/* map */
.map { position: relative; height: 560px; border: 2px solid var(--line); border-radius: 16px; overflow: hidden; }
.map-art { display: block; width: 100%; height: 100%; }
.map-art path { vector-effect: non-scaling-stroke; }
.pale { fill: #ecefe2; }
.town { fill: #f3ede7; }
.wood { fill: #d9e8c8; }
.lake { fill: #bdd8f3; }
.river { fill: none; stroke: #bdd8f3; stroke-width: 3; stroke-linejoin: round; }
.river .wide { stroke-width: 7; }
.rail { fill: none; stroke: #cccccb; stroke-width: 2; }
.road-case { fill: none; stroke: #f4d0a0; stroke-width: 6; stroke-linejoin: round; }
.road-fill { fill: none; stroke: #fadba6; stroke-width: 3; stroke-linejoin: round; }
.boundary { fill: none; stroke: #a6a8ab; stroke-width: 3; stroke-dasharray: 9 4 3 4; }
.depth { fill: none; stroke: #9ec1da; stroke-width: 10; }
.ferry { fill: none; stroke: #98bcd6; stroke-width: 3; stroke-dasharray: 6 5; }
.shield rect { fill: #fff; stroke: #808083; stroke-width: 2; rx: 2px; }
.shield text { font: 500 21px "Noto Sans", sans-serif; fill: #4c4c4e; text-anchor: middle; }
.place { font: 500 24px "Noto Sans", sans-serif; fill: #6b6c70; text-anchor: middle; stroke: #f8f4ef; stroke-width: 3; paint-order: stroke; stroke-linejoin: round; }
.town-name { font-size: 27px; fill: #626367; }
.city-name { font-size: 34px; fill: #5c5d61; }
.route { fill: none; stroke: #7f7de4; stroke-width: 6; stroke-linejoin: round; stroke-linecap: round; }
.zoom { position: absolute; top: 20px; left: 20px; border: 4px solid #bfbdbb; border-radius: 8px; overflow: hidden; }
.zoom button { display: flex; align-items: center; justify-content: center; width: 60px; height: 60px; padding-top: 8px; background: #fff; }
.zoom .hover { background: var(--wash); border-bottom: 2px solid #ddd; }
.credit { position: absolute; right: 0; bottom: 0; padding: 0 10px; background: #dde8f4; color: #8494a3; font: 400 18px/28px "Liberation Sans", sans-serif; }
.credit a { color: #929df0; text-decoration: none; }

/* stops */
.stops { display: flex; flex-direction: column; gap: 15px; margin-top: 32px; }
.stops li {
  display: flex;
  align-items: center;
  gap: 24px;
  padding: 24px 24px 22px;
  border: 2px solid var(--line);
  border-radius: 16px;
  background:
    linear-gradient(var(--wash), var(--wash)) left bottom / 100% 28px no-repeat,
    linear-gradient(var(--wash), var(--wash)) left bottom / 74px 52px no-repeat,
    #fff;
}
.mark { width: 24px; height: 24px; border-radius: 50%; background: #24c45f; }
.dropoff .mark { background: #e03a3a; }
h2 { font-size: 27px; line-height: 46px; font-weight: 500; }
.stops p { display: flex; gap: 24px; line-height: 40px; color: var(--muted); font-size: 23px; }

/* bottom bars */
.actions { display: flex; gap: 16px; padding: 32px 48px; border-top: 2px solid var(--line); }
.foot {
  display: flex;
  align-items: center;
  justify-content: space-between;
  padding: 20px 32px;
  background: var(--tint);
  border-top: 2px solid var(--line);
  color: var(--muted);
}
.btn-foot { height: 72px; padding: 0 26px; gap: 8px; border-radius: 12px; font-size: 25px; }
.btn-foot:disabled { background: #fcfdfe; border-color: #eff1f3; color: #8b8b90; font-weight: 400; }
```
